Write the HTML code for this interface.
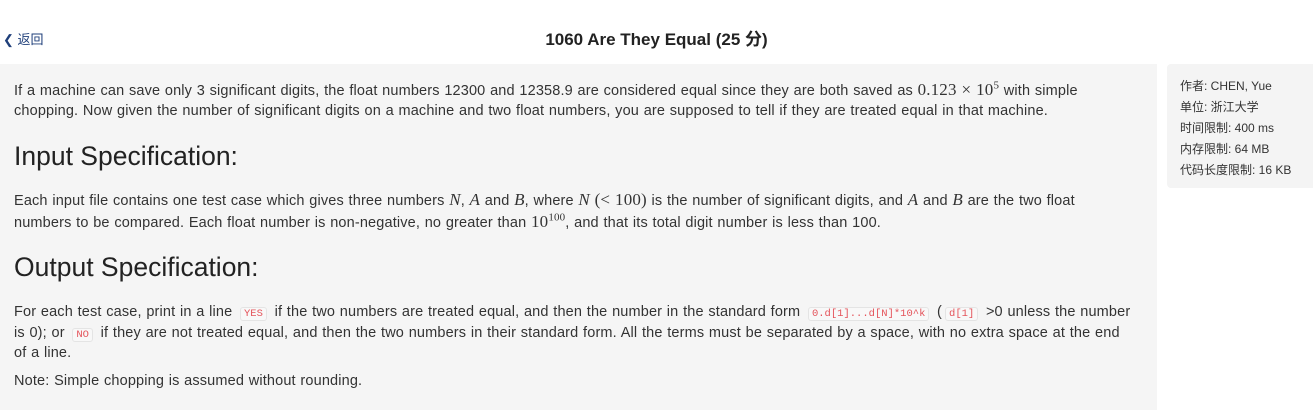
<!DOCTYPE html>
<html><head><meta charset="utf-8"><style>
body{margin:0;width:1313px;height:410px;background:#fff;font-family:"Liberation Sans","Noto Sans CJK SC",sans-serif;color:#333;overflow:hidden;position:relative}
.back{position:absolute;left:3px;top:29px;font-size:13px;color:#1f3f7a}
.title{position:absolute;left:0;width:1313px;top:25px;text-align:center;font-weight:bold;font-size:17px;color:#222}
.main{position:absolute;left:0;top:64px;width:1157px;height:346px;background:#f5f5f5}
.side{position:absolute;left:1167px;top:64px;width:150px;height:124px;background:#f4f4f4;border-radius:4px;font-size:12px;color:#333}
.side div{position:absolute;left:13px;white-space:nowrap}
.l{position:absolute;left:14px;font-size:14.5px;white-space:nowrap;letter-spacing:0.15px;word-spacing:0.5px;line-height:20px}
h2{position:absolute;left:14px;margin:0;font-weight:normal;font-size:26.5px;color:#222}
code{font-family:"Liberation Mono",monospace;font-size:10.5px;letter-spacing:0;word-spacing:0;color:#e4535a;background:#f8f8f8;border:1px solid #e4e4e4;border-radius:3px;padding:0 3px;margin:0 3px}
i{font-family:"Liberation Serif",serif;font-size:17px}
.m{font-family:'Liberation Serif',serif;font-size:17px}
sup{line-height:0}
</style></head><body>
<div class="back">&#10094; 返回</div>
<div class="title">1060 Are They Equal (25 分)</div>
<div class="main"></div>
<div class="l" style="top:80px">If a machine can save only 3 significant digits, the float numbers 12300 and 12358.9 are considered equal since they are both saved as <span class="m">0.123 × 10<sup style="font-size:11px">5</sup></span> with simple</div>
<div class="l" style="top:101px">chopping. Now given the number of significant digits on a machine and two float numbers, you are supposed to tell if they are treated equal in that machine.</div>
<h2 style="top:141px">Input Specification:</h2>
<div class="l" style="top:190px">Each input file contains one test case which gives three numbers <i>N</i>, <i>A</i> and <i>B</i>, where <i>N</i> <span class="m">(&lt; 100)</span> is the number of significant digits, and <i>A</i> and <i>B</i> are the two float</div>
<div class="l" style="top:212px">numbers to be compared. Each float number is non-negative, no greater than <span class="m">10<sup style="font-size:11px">100</sup></span>, and that its total digit number is less than 100.</div>
<h2 style="top:252px">Output Specification:</h2>
<div class="l" style="top:302px">For each test case, print in a line <code>YES</code> if the two numbers are treated equal, and then the number in the standard form <code>0.d[1]...d[N]*10^k</code> (<code>d[1]</code> &gt;0 unless the number</div>
<div class="l" style="top:323px">is 0); or <code>NO</code> if they are not treated equal, and then the two numbers in their standard form. All the terms must be separated by a space, with no extra space at the end</div>
<div class="l" style="top:343px">of a line.</div>
<div class="l" style="top:371px">Note: Simple chopping is assumed without rounding.</div>
<div class="side">
<div style="top:13px">作者: CHEN, Yue</div>
<div style="top:34px">单位: 浙江大学</div>
<div style="top:55px">时间限制: 400 ms</div>
<div style="top:76px">内存限制: 64 MB</div>
<div style="top:97px">代码长度限制: 16 KB</div>
</div>
</body></html>
